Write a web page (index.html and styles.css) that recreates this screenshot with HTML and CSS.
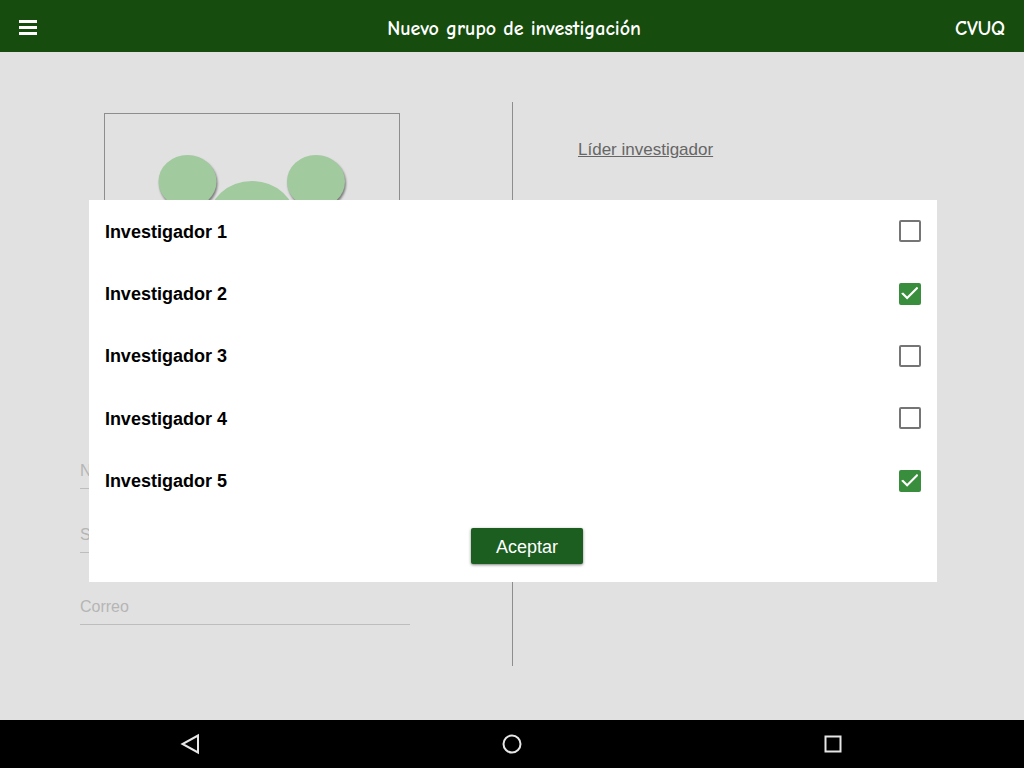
FILE: index.html
```html
<!DOCTYPE html>
<html lang="es">
<head>
<meta charset="utf-8">
<meta name="viewport" content="width=device-width, initial-scale=1">
<title>Nuevo grupo de investigación</title>
<link rel="stylesheet" href="styles.css">
</head>
<body class="app">
<header class="topbar">
  <button class="menu-button" type="button" aria-label="Menú">
    <svg width="18" height="15" viewBox="0 0 18 15" fill="#fff"><path d="M0 0h18v3H0zM0 6h18v3H0zM0 12h18v3H0z"/></svg>
  </button>
  <h1 class="title">Nuevo grupo de investigación</h1>
  <span class="brand">CVUQ</span>
</header>

<main class="content">
  <form class="group-form">
    <div class="photo">
      <svg class="group-icon" width="294" height="294" viewBox="0 0 294 294" fill="#a1ca9f">
        <g class="circle"><ellipse cx="82.500" cy="67.500" rx="29" ry="26.500"/></g>
        <g class="circle"><ellipse cx="211" cy="67.500" rx="29" ry="26.500"/></g>
        <ellipse cx="147" cy="107" rx="44" ry="40"/>
      </svg>
    </div>
    <input class="field" type="text" placeholder="Nombre" aria-label="Nombre">
    <input class="field" type="text" placeholder="Siglas" aria-label="Siglas">
    <input class="field field-last" type="email" placeholder="Correo" aria-label="Correo">
  </form>
  <section class="leader">
    <a class="leader-link" href="#lider">Líder investigador</a>
  </section>
</main>

<nav class="navbar" aria-label="Sistema">
  <button class="nav-button" type="button" aria-label="Atrás">
    <svg width="24" height="24" viewBox="0 0 24 24" fill="none" stroke="#e6e6e6" stroke-width="2"><path d="M19 3.500v17L3.500 12z"/></svg>
  </button>
  <button class="nav-button" type="button" aria-label="Inicio">
    <svg width="24" height="24" viewBox="0 0 24 24" fill="none" stroke="#e6e6e6" stroke-width="2"><circle cx="12" cy="12" r="8.500"/></svg>
  </button>
  <button class="nav-button" type="button" aria-label="Recientes">
    <svg width="24" height="24" viewBox="0 0 24 24" fill="none" stroke="#e6e6e6" stroke-width="2"><rect x="4.500" y="4.500" width="15" height="15"/></svg>
  </button>
</nav>

<div class="overlay">
  <form class="modal" role="dialog" aria-label="Investigadores">
    <div class="people">
      <label class="person"><span class="name">Investigador 1</span><input class="check" type="checkbox"></label>
      <label class="person"><span class="name">Investigador 2</span><input class="check" type="checkbox" checked></label>
      <label class="person"><span class="name">Investigador 3</span><input class="check" type="checkbox"></label>
      <label class="person"><span class="name">Investigador 4</span><input class="check" type="checkbox"></label>
      <label class="person"><span class="name">Investigador 5</span><input class="check" type="checkbox" checked></label>
    </div>
    <div class="actions">
      <button class="accept" type="button">Aceptar</button>
    </div>
  </form>
</div>
</body>
</html>
```
FILE: styles.css
```css
* { box-sizing: border-box; }

.app {
  margin: 0;
  min-height: 100vh;
  display: flex;
  flex-direction: column;
  background: #e1e1e1;
  font-family: "Liberation Sans", Arial, sans-serif;
}

.topbar {
  display: grid;
  grid-template-columns: 1fr auto 1fr;
  align-items: center;
  padding: 4px 19px 0;
  height: 52px;
  background: #164c0e;
  color: #fff;
  font-family: "Comic Sans MS", "Comic Neue", Lato, sans-serif;
  font-size: 20px;
  font-weight: 700;
}

.title {
  margin: 0;
  padding-left: 4px;
  font-size: inherit;
}

.brand { justify-self: end; }

.menu-button,
.nav-button {
  display: flex;
  padding: 0;
  border: 0;
  background: none;
}

.menu-button {
  justify-self: start;
  padding-bottom: 2px;
}

.content {
  flex: 1;
  display: grid;
  grid-template-columns: 1fr 1fr;
  padding: 50px 0 54px;
}

.group-form {
  display: flex;
  flex-direction: column;
  padding: 11px 102px 0 80px;
}

.photo {
  margin: 0 10px 38px 24px;
  border: 1px solid #8d8d8d;
}

.group-icon {
  display: block;
  width: 100%;
}

.circle { filter: drop-shadow(1px 2px 1px #777); }

.field {
  width: 100%;
  height: 42px;
  margin: 0 0 22px;
  padding: 6px 0 0;
  border: 0;
  border-bottom: 1px solid #bdbdbd;
  background: none;
  color: #444;
  font: 16px "Liberation Sans", Arial, sans-serif;
}

.field::placeholder { color: #b5b5b5; }

.field-last { margin: 8px 0 0; }

.leader {
  padding: 38px 64px 0 65px;
  border-left: 1px solid #8d8d8d;
}

.leader-link {
  color: #666;
  font-size: 17px;
  line-height: 20px;
}

.navbar {
  display: flex;
  justify-content: space-between;
  align-items: center;
  height: 48px;
  padding: 0 179px;
  background: #000;
}

.overlay {
  position: fixed;
  inset: 0;
  display: flex;
  align-items: center;
  justify-content: center;
  padding: 14px 0 0 2px;
}

.modal {
  width: 83%;
  background: #fff;
}

.people {
  display: grid;
  grid-auto-rows: 1fr;
  height: 312px;
}

.person {
  display: flex;
  align-items: center;
  justify-content: space-between;
  padding: 0 16px;
  color: #000;
  font-size: 18px;
  font-weight: 700;
}

.name { padding-top: 2px; }

.check {
  appearance: none;
  width: 22px;
  height: 22px;
  margin: 0;
  border: 2px solid #757575;
  border-radius: 2px;
}

.check:checked {
  display: grid;
  place-items: center;
  border-color: #388e3c;
  background: #388e3c;
}

.check:checked::before {
  content: "";
  width: 18px;
  height: 14px;
  background: #fff;
  clip-path: polygon(2px 6px, 6px 10px, 16px 0, 17px 2px, 6px 13px, 0 7px);
}

.actions {
  display: flex;
  justify-content: center;
  padding: 16px 0 18px 28px;
}

.accept {
  width: 112px;
  height: 36px;
  padding: 2px 0 0;
  border: 0;
  border-radius: 2px;
  background: #1b5e20;
  box-shadow: 0 1px 3px rgba(0, 0, 0, 0.5);
  color: #fff;
  font: 18px "Liberation Sans", Arial, sans-serif;
}
```
